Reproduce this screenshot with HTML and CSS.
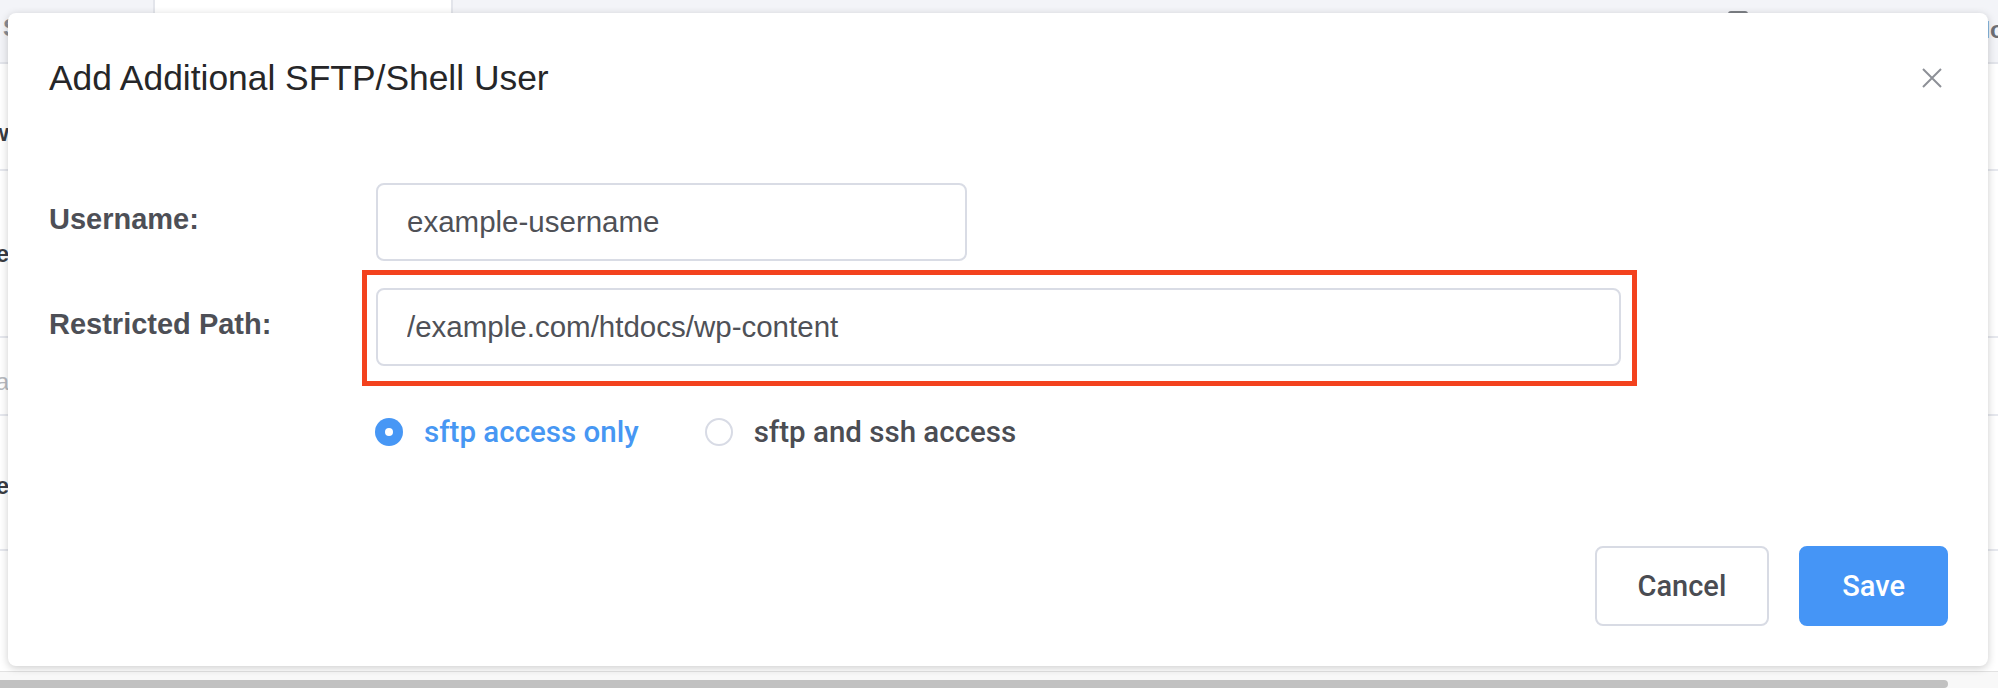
FILE: index.html
```html
<!DOCTYPE html>
<html lang="en">
<head>
  <meta charset="UTF-8" />
  <meta name="viewport" content="width=device-width,initial-scale=1" />
  <title>Add Additional SFTP/Shell User</title>
  <link rel="stylesheet" href="styles.css">
</head>
<body>
  <div class="page">
    <div class="tabs">
      <span class="tab">Sites</span>
      <span class="tab active"></span>
      <span class="tool"></span>
      <span class="more">Monitor</span>
    </div>
    <div class="row r1"><span class="lead">New</span></div>
    <div class="row r2"><span class="lead">Name</span></div>
    <div class="row r3"><span class="lead hint">Search a</span></div>
    <div class="row r4"><span class="lead">Type</span></div>
    <div class="row r5"></div>
    <div class="hscroll"><div class="thumb"></div></div>
  </div>

  <div class="modal">
    <div class="modal-head">
      <h2>Add Additional SFTP/Shell User</h2>
      <button class="close" aria-label="Close">
        <svg width="20" height="20" viewBox="0 0 20 20"><path d="M1 1L19 19M19 1L1 19" stroke="#8d9097" stroke-width="2" fill="none"/></svg>
      </button>
    </div>

    <div class="modal-body">
      <div class="form">
        <label class="label">Username:</label>
        <input class="input short" type="text" value="example-username">

        <label class="label">Restricted Path:</label>
        <div class="highlight">
          <input class="input" type="text" value="/example.com/htdocs/wp-content">
        </div>

        <div class="choices">
          <span class="choice on"><span class="dot"></span>sftp access only</span>
          <span class="choice"><span class="dot"></span>sftp and ssh access</span>
        </div>
      </div>
    </div>

    <div class="modal-foot">
      <button class="btn">Cancel</button>
      <button class="btn primary">Save</button>
    </div>
  </div>
</body>
</html>
```

FILE: styles.css
```css
*{box-sizing:border-box}
html,body{margin:0;height:100%}
body{font-family:"Liberation Sans",Arial,sans-serif;background:#fff;color:#333;overflow:hidden;position:relative}

/* page behind the dialog */
.page{height:688px;display:flex;flex-direction:column}
.tabs{display:flex;height:64px;flex:none;background:#f3f4f8;border-bottom:2px solid #e3e5eb}
.tabs > span{flex:none}
.tab{width:153px;padding:14px 0 0 3px;font-size:24px;font-weight:bold;color:#8a8c92}
.tab.active{width:300px;background:#fff;border-left:2px solid #e3e5eb;border-right:2px solid #e3e5eb}
.tool{width:20px;height:20px;margin:11px 0 0 1275px;background:#7d8086;border-radius:3px}
.more{margin:16px 0 0 222px;font-size:24px;font-weight:bold;color:#6d7077;white-space:nowrap}
.row{flex:none;display:flex;align-items:flex-start;border-bottom:2px solid #e6e8ee;font-size:24px;font-weight:bold;color:#3a3c42}
.lead{display:flex;justify-content:flex-end;width:9px;white-space:nowrap;line-height:28px}
.hint{color:#b9bbc0;font-weight:normal}
.r1{height:107px;padding-top:55px}
.r2{height:167px;padding-top:69px}
.r3{height:78px;padding-top:30px}
.r4{height:135px;padding-top:56px}
.r5{flex:1;border-bottom:1px solid #e2e2e2}
.hscroll{flex:none;height:16px;background:#f8f8f8;padding-top:8px}
.thumb{width:1948px;height:8px;background:#c1c1c1;border-radius:0 6px 6px 0}

/* dialog */
.modal{position:absolute;left:8px;top:13px;width:1980px;height:653px;background:#fff;border-radius:8px;
       box-shadow:0 2px 8px rgba(0,0,0,.2);display:flex;flex-direction:column}
.modal-head{display:flex;align-items:center;justify-content:space-between;padding:45px 46px 0 41px}
.modal-head h2{margin:0;font-size:35.4px;line-height:40px;font-weight:normal;color:#262628}
.close{width:20px;height:20px;padding:0;border:none;background:none;display:flex;cursor:pointer}

.modal-body{padding:85px 0 0 41px}
.form{display:grid;grid-template-columns:327px 1245px;row-gap:27px;align-items:center}
.label{font-size:29px;font-weight:bold;color:#4d4f56;line-height:28px;padding-bottom:6px}
.input{display:block;width:100%;height:78px;margin:0;padding:0 29px;border:2px solid #d9dce5;border-radius:8px;
       background:#fff;font:29.5px "Liberation Sans",Arial,sans-serif;color:#4f5157;outline:none}
.input.short{width:591px}
.highlight{margin:-18px -16px -20px -14px;padding:13px 11px 15px 9px;border:5px solid #f3421e}

.choices{grid-column:2;display:flex;align-items:center;margin:25px 0 0 -1px}
.choice{display:flex;align-items:center;gap:21px;margin-right:66px;font:500 29.5px Roboto,sans-serif;line-height:28px;color:#4b4d53}
.dot{width:28px;height:28px;border-radius:50%;border:2px solid #d8dbe5;background:#fff}
.choice.on{color:#4797f3}
.choice.on .dot{border:none;background:#4797f5;display:flex;align-items:center;justify-content:center}
.choice.on .dot::after{content:"";width:8px;height:8px;border-radius:50%;background:#fff}

.modal-foot{margin-top:auto;display:flex;justify-content:flex-end;gap:30px;padding:0 40px 40px 0}
.btn{height:80px;padding:0 41px;border:2px solid #d8dbe4;border-radius:8px;background:#fff;
     font:500 29px Roboto,sans-serif;color:#4a4c52;cursor:pointer}
.btn.primary{background:#4595f6;border-color:#4595f6;color:#fff}
```
